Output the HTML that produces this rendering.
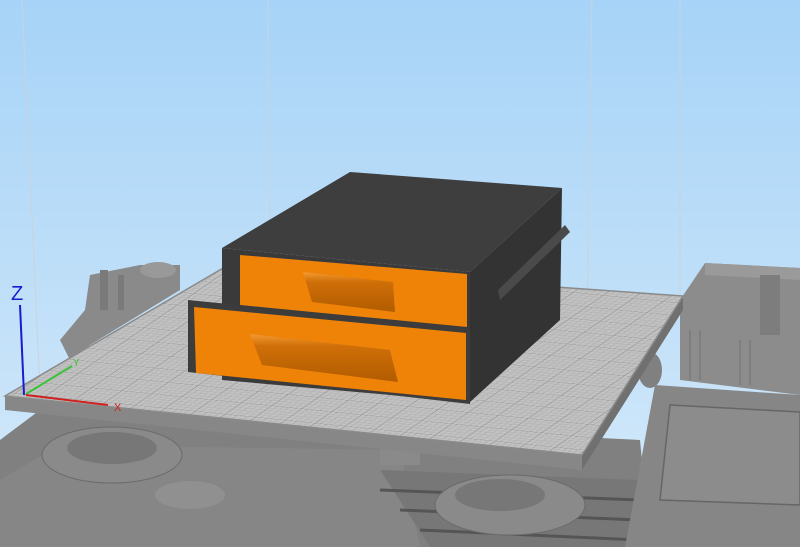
<!DOCTYPE html>
<html><head><style>
html,body{margin:0;padding:0;width:800px;height:547px;overflow:hidden;font-family:"Liberation Sans",sans-serif;}
</style></head><body>
<svg width="800" height="547" viewBox="0 0 800 547" xmlns="http://www.w3.org/2000/svg">
<defs>
<linearGradient id="bg" x1="0" y1="0" x2="0" y2="1">
<stop offset="0" stop-color="#a6d3f7"/><stop offset="1" stop-color="#d6eafa"/>
</linearGradient>
<linearGradient id="hd" x1="0" y1="0" x2="0" y2="1">
<stop offset="0" stop-color="#f49a30"/><stop offset="0.25" stop-color="#cf6f08"/><stop offset="1" stop-color="#b25c00"/>
</linearGradient>
<pattern id="grid" width="30" height="30" patternUnits="userSpaceOnUse" patternTransform="matrix(1,0.1,-0.55,0.38,0,0)">
<rect width="30" height="30" fill="#c2c2c2"/>
<path d="M0 6H30M0 12H30M0 18H30M0 24H30M6 0V30M12 0V30M18 0V30M24 0V30" stroke="#adadad" stroke-width="0.8"/>
<path d="M0 0H30M0 0V30" stroke="#8e8e8e" stroke-width="1.6"/>
</pattern>
</defs>
<rect width="800" height="547" fill="url(#bg)"/>
<g stroke="#c9d3dc" stroke-width="1">
<line x1="22" y1="0" x2="40" y2="390"/>
<line x1="268" y1="0" x2="270" y2="250"/>
<line x1="592" y1="0" x2="585" y2="450"/>
<line x1="680" y1="0" x2="680" y2="300"/>
</g>
<!-- lower machinery -->
<polygon points="0,440 40,410 640,440 650,547 0,547" fill="#808080"/>
<polygon points="0,480 60,445 400,450 420,547 0,547" fill="#868686"/>
<polygon points="380,470 640,480 640,547 430,547" fill="#777"/>
<path d="M380 490 L640 500 M400 510 L640 520 M420 530 L640 540" stroke="#555" stroke-width="3"/>
<ellipse cx="112" cy="455" rx="70" ry="28" fill="#8a8a8a" stroke="#6a6a6a"/>
<ellipse cx="112" cy="448" rx="45" ry="16" fill="#777"/>
<ellipse cx="510" cy="505" rx="75" ry="30" fill="#8a8a8a" stroke="#6a6a6a"/>
<ellipse cx="500" cy="495" rx="45" ry="16" fill="#777"/>
<ellipse cx="190" cy="495" rx="35" ry="14" fill="#909090"/>
<rect x="380" y="440" width="40" height="25" fill="#8a8a8a"/>
<!-- back-left electronics -->
<polygon points="60,340 85,310 90,275 140,265 180,265 180,290 90,345 70,360" fill="#8a8a8a"/>
<ellipse cx="158" cy="270" rx="18" ry="8" fill="#999"/>
<rect x="100" y="270" width="8" height="40" fill="#7a7a7a"/>
<rect x="118" y="275" width="6" height="35" fill="#7a7a7a"/>
<!-- right machine -->
<polygon points="680,300 705,263 800,268 800,395 680,380" fill="#8c8c8c"/>
<polygon points="705,263 800,268 800,280 705,275" fill="#9a9a9a"/>
<rect x="760" y="275" width="20" height="60" fill="#7d7d7d"/>
<path d="M690 330 V380 M700 330V380 M740 340V385 M750 340V385" stroke="#707070"/>
<ellipse cx="650" cy="370" rx="12" ry="18" fill="#808080"/>
<polygon points="655,385 800,395 800,547 625,547" fill="#868686"/>
<polygon points="670,405 800,412 800,505 660,500" fill="#8c8c8c" stroke="#666" stroke-width="1.5"/>
<!-- bed -->
<polygon points="5,396 5,410 582,470 683,310 683,296 582,455" fill="#878787"/>
<polygon points="582,455 683,296 683,310 582,470" fill="#707070"/>
<polygon points="5,396 230,264 683,296 582,455" fill="url(#grid)"/>
<polygon points="5,396 230,264 683,296 582,455" fill="none" stroke="#8a8a8a" stroke-width="1.5"/>
<!-- axes -->
<line x1="20" y1="305" x2="24" y2="395" stroke="#1a1ad0" stroke-width="2"/>
<text x="11" y="300" font-size="20" fill="#1a1ad0">Z</text>
<line x1="26" y1="394" x2="72" y2="366" stroke="#3ac23a" stroke-width="2"/>
<text x="73" y="366" font-size="10" fill="#3ac23a">Y</text>
<line x1="26" y1="395" x2="108" y2="405" stroke="#d02020" stroke-width="2"/>
<text x="114" y="411" font-size="11" fill="#d02020">X</text>
<!-- box -->
<polygon points="222,248 350,172 562,188 470,272" fill="#3e3e3e"/>
<polygon points="470,272 562,188 560,320 470,402" fill="#333"/>
<polygon points="498,290 565,225 570,232 500,300" fill="#4a4a4a"/>
<polygon points="222,248 470,272 470,402 222,380" fill="#3a3a3a"/>
<polygon points="240,255 467,274 467,327 240,305" fill="#ee8308"/>
<polygon points="188,300 470,328 470,404 188,372" fill="#3c3c3c"/>
<polygon points="194,307 466,333 466,400 196,373" fill="#ee8308"/>
<polygon points="303,272 393,282 395,312 312,302" fill="url(#hd)"/>
<polygon points="250,334 390,350 398,382 262,365" fill="url(#hd)"/>
</svg>
</body></html>
